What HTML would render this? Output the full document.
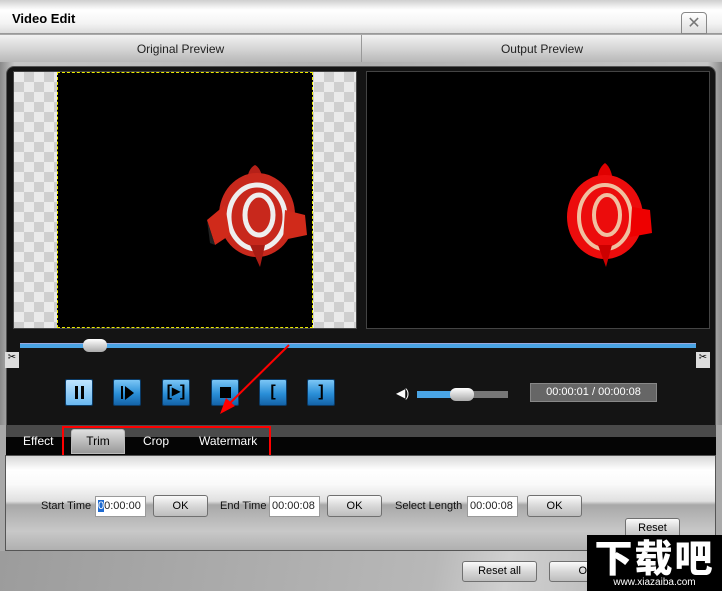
<!DOCTYPE html>
<html><head><meta charset="utf-8"><style>
*{margin:0;padding:0;box-sizing:border-box}
body{width:722px;height:591px;overflow:hidden;background:#a9a9a9;font-family:"Liberation Sans",sans-serif;position:relative}
.a{position:absolute}
.btn{position:absolute;background:linear-gradient(#fafafa,#d8d8d8 50%,#bdbdbd);border:1px solid #707070;border-radius:3px;font-size:11px;text-align:center;color:#000}
.pb{position:absolute;top:379px;width:28px;height:27px;background:linear-gradient(#7cc6f5,#2a8fd8 55%,#1463a8);border:1px solid #0b3b66;border-radius:2px}
.inp{position:absolute;top:496px;height:21px;background:#fff;border:1px solid #9a9a9a;font-size:11px;padding:3px 2px;color:#222}
.lbl{position:absolute;top:500px;font-size:11px;color:#111}
.chk{background-color:#eaeaea;background-image:linear-gradient(45deg,#cfcfcf 25%,transparent 25%,transparent 75%,#cfcfcf 75%),linear-gradient(45deg,#cfcfcf 25%,transparent 25%,transparent 75%,#cfcfcf 75%);background-size:20px 20px;background-position:0 0,10px 10px}
</style></head><body>
<div class="a" style="left:0;top:0;width:722px;height:34px;background:linear-gradient(#cfcfcf,#fff 30%,#f4f4f4 70%,#dcdcdc);border-bottom:1px solid #999"></div>
<div class="a" style="left:12px;top:11px;font-size:13px;font-weight:bold">Video Edit</div>
<div class="a" style="left:681px;top:12px;width:26px;height:22px;border:1px solid #888;border-radius:4px 4px 0 0;background:linear-gradient(#fff,#ddd);text-align:center;font-size:16px;color:#777;line-height:22px">✕</div>
<div class="a" style="left:0;top:35px;width:722px;height:27px;background:linear-gradient(#f2f2f2,#d0d0d0 60%,#b8b8b8)"></div>
<div class="a" style="left:361px;top:35px;width:1px;height:27px;background:#999"></div>
<div class="a" style="left:0;top:42px;width:361px;text-align:center;font-size:12px;color:#222">Original Preview</div>
<div class="a" style="left:362px;top:42px;width:360px;text-align:center;font-size:12px;color:#222">Output Preview</div>
<div class="a" style="left:0;top:62px;width:722px;height:363px;background:linear-gradient(90deg,#8a8a8a,#c6c6c6 2%,#b0b0b0 50%,#c6c6c6 98%,#8a8a8a)"></div>
<div class="a" style="left:6px;top:66px;width:710px;height:370px;background:#141414;border-radius:8px 8px 0 0;border:1px solid #555"></div>
<div class="a chk" style="left:13px;top:71px;width:344px;height:258px;border:1px solid #444"></div>
<div class="a" style="left:57px;top:72px;width:256px;height:256px;background:#000;border:1px dashed #ee0"></div>
<div class="a" style="left:366px;top:71px;width:344px;height:258px;background:#000;border:1px solid #444"></div>
<svg class="a" style="left:195px;top:155px" width="120" height="120" viewBox="0 0 120 120">
<path d="M60 10 C70 15 70 40 65 50 L55 50 C50 35 50 15 60 10Z" fill="#b52018"/>
<ellipse cx="62" cy="60" rx="38" ry="42" fill="#c8281c"/>
<ellipse cx="62" cy="62" rx="28" ry="32" fill="none" stroke="#eee" stroke-width="5"/>
<ellipse cx="64" cy="60" rx="14" ry="20" fill="none" stroke="#eee" stroke-width="5"/>
<path d="M12 65 L30 50 L35 80 L20 90Z" fill="#d02a1a"/><path d="M12 65 L20 90 L15 88Z" fill="#222"/>
<path d="M110 60 L90 55 L88 85 L112 80Z" fill="#d02a1a"/>
<path d="M55 90 L70 90 L65 112Z" fill="#a81c14"/>
</svg>
<svg class="a" style="left:550px;top:155px" width="120" height="120" viewBox="0 0 120 120">
<path d="M55 8 C65 15 65 40 60 50 L50 50 C45 35 45 15 55 8Z" fill="#e00000"/>
<ellipse cx="55" cy="62" rx="38" ry="42" fill="#ec0c0c"/>
<ellipse cx="55" cy="62" rx="26" ry="32" fill="none" stroke="#f0c0a0" stroke-width="4"/>
<ellipse cx="57" cy="60" rx="13" ry="20" fill="none" stroke="#f0c0a0" stroke-width="4"/>
<path d="M100 55 L82 52 L80 82 L102 78Z" fill="#e00"/>
<path d="M48 90 L62 90 L56 112Z" fill="#c00"/>
</svg>
<div class="a" style="left:20px;top:343px;width:676px;height:5px;background:#4aa4e4;border-top:1px solid #9ad"></div>
<div class="a" style="left:83px;top:339px;width:24px;height:13px;border-radius:6px;background:linear-gradient(#fff,#aaa)"></div>
<div class="a" style="left:5px;top:352px;width:14px;height:16px;background:#ddd;font-size:10px;text-align:center">✂</div>
<div class="a" style="left:696px;top:352px;width:14px;height:16px;background:#ddd;font-size:10px;text-align:center">✂</div>
<div class="pb" style="left:65px;background:linear-gradient(#bfe4ff,#6ab8f0)"><div class="a" style="left:9px;top:6px;width:3px;height:13px;background:#000"></div><div class="a" style="left:15px;top:6px;width:3px;height:13px;background:#000"></div></div>
<div class="pb" style="left:113px"><div class="a" style="left:7px;top:6px;width:2px;height:13px;background:#000"></div><div class="a" style="left:11px;top:6px;border-left:9px solid #000;border-top:7px solid transparent;border-bottom:7px solid transparent"></div></div>
<div class="pb" style="left:162px;color:#000;font-weight:bold;font-size:16px;text-align:center;line-height:24px">[▸]</div>
<div class="pb" style="left:211px"><div class="a" style="left:8px;top:7px;width:11px;height:11px;background:#000"></div></div>
<div class="pb" style="left:259px;color:#000;font-weight:bold;font-size:16px;text-align:center;line-height:24px">[</div>
<div class="pb" style="left:307px;color:#000;font-weight:bold;font-size:16px;text-align:center;line-height:24px">]</div>
<div class="a" style="left:396px;top:386px;color:#fff;font-size:12px">◀)</div>
<div class="a" style="left:417px;top:391px;width:91px;height:7px;background:#777"></div>
<div class="a" style="left:417px;top:391px;width:40px;height:7px;background:#4aa4e4"></div>
<div class="a" style="left:450px;top:388px;width:24px;height:13px;border-radius:6px;background:linear-gradient(#fff,#aaa)"></div>
<div class="a" style="left:530px;top:383px;width:127px;height:19px;background:#666;border:1px solid #888;color:#fff;font-size:11px;text-align:center;line-height:17px">00:00:01 / 00:00:08</div>
<svg class="a" style="left:0;top:0" width="722" height="591"><path d="M289 345 L228 405" stroke="#f00" stroke-width="2"/><path d="M220 414 L226 398 L235 406Z" fill="#f00"/></svg>
<div class="a" style="left:6px;top:425px;width:710px;height:30px;background:linear-gradient(#4a4a4a 0,#4a4a4a 40%,#050505 40%)"></div>
<div class="a" style="left:23px;top:434px;color:#fff;font-size:12px">Effect</div>
<div class="a" style="left:71px;top:429px;width:54px;height:25px;background:linear-gradient(#dedede,#999);border:1px solid #bbb;border-radius:3px 3px 0 0;font-size:12px;text-align:center;line-height:22px">Trim</div>
<div class="a" style="left:143px;top:434px;color:#fff;font-size:12px">Crop</div>
<div class="a" style="left:199px;top:434px;color:#fff;font-size:12px">Watermark</div>
<div class="a" style="left:62px;top:426px;width:209px;height:31px;border:2px solid #f00"></div>
<div class="a" style="left:5px;top:455px;width:711px;height:96px;border:1px solid #555;background:linear-gradient(#d8d8d8,#fff 15%,#fafafa 30%,#e0e0e0 48%,#a8a8a8 52%,#c8c8c8 80%,#b0b0b0)"></div>
<div class="lbl" style="left:41px">Start Time</div>
<div class="inp" style="left:95px;width:51px"><span style="background:#1e6ad0;color:#fff">0</span>0:00:00</div>
<div class="btn" style="left:153px;top:495px;width:55px;height:22px;line-height:20px">OK</div>
<div class="lbl" style="left:220px">End Time</div>
<div class="inp" style="left:269px;width:51px">00:00:08</div>
<div class="btn" style="left:327px;top:495px;width:55px;height:22px;line-height:20px">OK</div>
<div class="lbl" style="left:395px">Select Length</div>
<div class="inp" style="left:467px;width:51px">00:00:08</div>
<div class="btn" style="left:527px;top:495px;width:55px;height:22px;line-height:20px">OK</div>
<div class="btn" style="left:625px;top:518px;width:55px;height:20px;line-height:18px">Reset</div>
<div class="a" style="left:0;top:551px;width:722px;height:40px;background:linear-gradient(100deg,#9c9c9c,#b8b8b8 60%,#d0d0d0 70%,#a8a8a8)"></div>
<div class="btn" style="left:462px;top:561px;width:75px;height:21px;line-height:19px">Reset all</div>
<div class="btn" style="left:549px;top:561px;width:75px;height:21px;line-height:19px">OK</div>
<div class="a" style="left:587px;top:535px;width:135px;height:56px;background:#000;color:#fff">
<div style="font-family:'Noto Sans CJK SC',sans-serif;font-weight:900;font-size:38px;line-height:42px;text-align:center;letter-spacing:2px">下载吧</div>
<div style="font-size:10px;text-align:center;line-height:12px">www.xiazaiba.com</div></div>
</body></html>
